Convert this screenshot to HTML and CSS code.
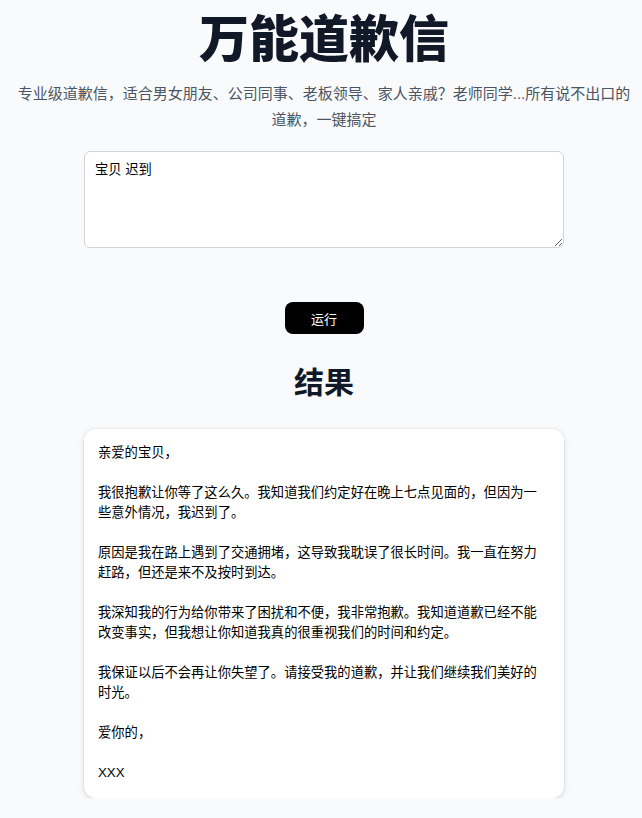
FILE: index.html
```html
<!DOCTYPE html>
<html lang="zh-CN">
<head>
<meta charset="UTF-8">
<meta name="viewport" content="width=device-width, initial-scale=1.0">
<title>万能道歉信</title>
<link rel="stylesheet" href="styles.css">
</head>
<body>

<!-- 标题 -->
<main class="page">
  <h1 class="title">万能道歉信</h1>
  <p class="subtitle">专业级道歉信，适合男女朋友、公司同事、老板领导、家人亲戚？老师同学...所有说不出口的道歉，一键搞定</p>

  <!-- 输入 -->
  <textarea class="prompt">宝贝 迟到</textarea>

  <button class="run-button">运行</button>

  <!-- 结果 -->
  <h2 class="result-title">结果</h2>
  <div class="result-card">亲爱的宝贝，

我很抱歉让你等了这么久。我知道我们约定好在晚上七点见面的，但因为一些意外情况，我迟到了。

原因是我在路上遇到了交通拥堵，这导致我耽误了很长时间。我一直在努力赶路，但还是来不及按时到达。

我深知我的行为给你带来了困扰和不便，我非常抱歉。我知道道歉已经不能改变事实，但我想让你知道我真的很重视我们的时间和约定。

我保证以后不会再让你失望了。请接受我的道歉，并让我们继续我们美好的时光。

爱你的，

XXX</div>
</main>

</body>
</html>
```

FILE: styles.css
```css
/* Grundlayout */
body {
  margin: 0;
  padding: 10px 5px 0 11px;
  background-color: #f9fafb;
  color: #111827;
  font-family: "Liberation Sans", "Noto Sans CJK SC", sans-serif;
}
.page {
  display: flex;
  flex-direction: column;
  align-items: center;
}
.title {
  margin: 0;
  font-size: 50px;
  line-height: 60px;
  font-weight: 900;
  color: #111827;
}
.subtitle {
  margin: 11px 0 0;
  font-size: 15px;
  line-height: 26px;
  color: #4b5563;
  text-align: center;
}
/* Eingabefeld */
.prompt {
  box-sizing: border-box;
  width: 480px;
  height: 97px;
  margin-top: 18px;
  padding: 8px 10px;
  border: 1px solid #d1d5db;
  border-radius: 6px;
  background-color: #fff;
  font-family: inherit;
  font-size: 13.3px;
  line-height: 20px;
  color: #000;
}
.run-button {
  margin-top: 54px;
  width: 79px;
  height: 32px;
  border: none;
  border-radius: 8px;
  background-color: #000;
  color: #fff;
  font-family: inherit;
  font-size: 13px;
  cursor: pointer;
}
.result-title {
  margin: 31px 0 0;
  font-size: 30px;
  line-height: 36px;
  font-weight: 700;
  color: #111827;
}
/* Ergebnis-Karte */
.result-card {
  box-sizing: border-box;
  width: 480px;
  margin-top: 28px;
  padding: 14px 14px 15px;
  background-color: #fff;
  border-radius: 12px;
  box-shadow: 0 2px 6px rgba(0, 0, 0, 0.12), 0 0 0 1px rgba(0, 0, 0, 0.03);
  white-space: pre-wrap;
  font-size: 13.3px;
  line-height: 20px;
  color: #000;
}
```
